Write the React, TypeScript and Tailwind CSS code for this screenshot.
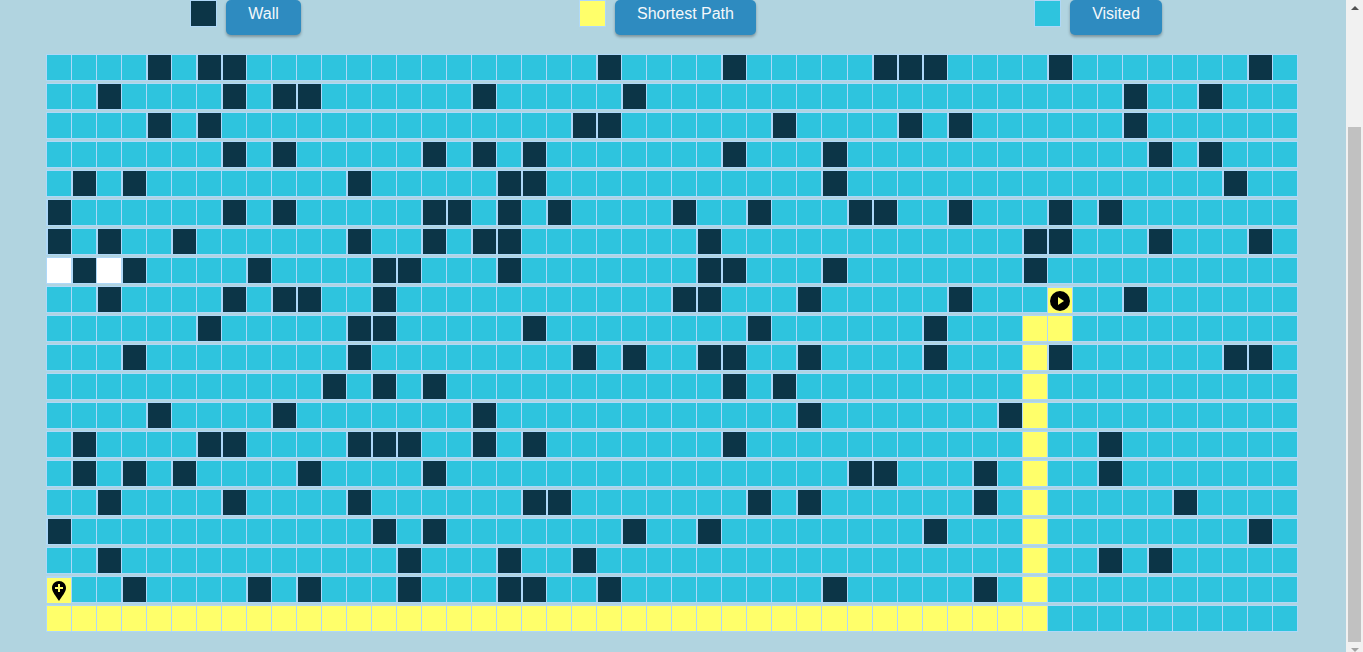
// Pathfinding board: legend on top, then a 20 x 50 grid of cells. The page is shown scrolled,
// so the legend row is clipped at the top edge.

const COLS = 50

// wall column indexes per row
const WALLS: number[][] = [
  [4, 6, 7, 22, 27, 33, 34, 35, 40, 48],
  [2, 7, 9, 10, 17, 23, 43, 46],
  [4, 6, 21, 22, 29, 34, 36, 43],
  [7, 9, 15, 17, 19, 27, 31, 44, 46],
  [1, 3, 12, 18, 19, 31, 47],
  [0, 7, 9, 15, 16, 18, 20, 25, 28, 32, 33, 36, 40, 42],
  [0, 2, 5, 12, 15, 17, 18, 26, 39, 40, 44, 48],
  [1, 3, 8, 13, 14, 18, 26, 27, 31, 39],
  [2, 7, 9, 10, 13, 25, 26, 30, 36, 43],
  [6, 12, 13, 19, 28, 35],
  [3, 12, 21, 23, 26, 27, 30, 35, 40, 47, 48],
  [11, 13, 15, 27, 29],
  [4, 9, 17, 30, 38],
  [1, 6, 7, 12, 13, 14, 17, 19, 27, 42],
  [1, 3, 5, 10, 15, 32, 33, 37, 42],
  [2, 7, 12, 19, 20, 28, 30, 37, 45],
  [0, 13, 15, 23, 26, 35, 48],
  [2, 14, 18, 21, 42, 44],
  [3, 8, 10, 14, 18, 19, 22, 31, 37],
  [],
]

const UNVISITED: [number, number][] = [
  [7, 0],
  [7, 2],
]

function isPath(row: number, col: number) {
  if (row === 19) return col < 40
  if (row === 18 && col === 0) return true
  if (row === 8 && col === 40) return true
  if (row === 9 && col === 40) return true
  return row >= 9 && row <= 18 && col === 39
}

function cellClass(row: number, col: number) {
  // walls sit one pixel further in on their left side
  if (WALLS[row].includes(col)) return "border-y border-l-2 bg-[#0c3547]"
  if (UNVISITED.some(([r, c]) => r === row && c === col)) return "border-y border-l bg-white"
  if ((row === 18 && col === 0) || (row === 8 && col === 40)) return "border-t-2 border-l bg-[#ffff6a]"
  if (isPath(row, col)) return "border-y border-l bg-[#ffff6a]"
  return "border-y border-l bg-[#2ec4de]"
}

function PinIcon() {
  return (
    <svg viewBox="0 0 14 20" className="h-5 w-[14px]">
      <path d="M7 0C3 0 0 3 0 7c0 4 4 8 7 13 3-5 7-9 7-13 0-4-3-7-7-7z" fill="#000" />
      <path d="M6 3h2v3h3v2H8v3H6V8H3V6h3z" fill="#ffff6a" />
    </svg>
  )
}

function StartIcon() {
  return (
    <svg viewBox="0 0 20 20" className="h-5 w-5">
      <circle cx="10" cy="10" r="10" fill="#000" />
      <path d="M8 6l6 4-6 4z" fill="#ffff6a" />
    </svg>
  )
}

function LegendItem({ label, swatch, width }: { label: string; swatch: string; width: string }) {
  return (
    <div className="flex items-start gap-[9px]">
      <div className={`h-[27px] w-[27px] border border-[#afd8f8] ${swatch}`} />
      <button
        className={`flex h-[35px] items-start justify-center rounded-[5px] bg-[#2e8bc0] pt-[2px] text-base text-[#f4f8fb] shadow-[0_2px_3px_rgba(0,0,0,0.3)] ${width}`}
      >
        {label}
      </button>
    </div>
  )
}

export default function App() {
  return (
    <div className="flex h-[652px] overflow-hidden bg-[#b1d4e0] font-['Liberation_Sans',sans-serif]">
      <main className="w-[1346px] shrink-0">
        <div className="flex h-[54px] gap-[278px] pl-[190px]">
          <LegendItem label="Wall" swatch="bg-[#0c3547]" width="w-[75px]" />
          <LegendItem label="Shortest Path" swatch="bg-[#ffff6a]" width="w-[141px]" />
          <LegendItem label="Visited" swatch="bg-[#2ec4de]" width="w-[92px]" />
        </div>

        <div className="ml-[46px] flex w-[1252px] flex-col gap-[2px]">
          {WALLS.map((_, row) => (
            <div key={row} className="flex h-[27px] border-r border-[#afd8f8]">
              {Array.from({ length: COLS }, (_, col) => (
                <div
                  key={col}
                  className={`flex w-[25.02px] shrink-0 items-center justify-center border-[#afd8f8] ${cellClass(row, col)}`}
                >
                  {row === 18 && col === 0 && <PinIcon />}
                  {row === 8 && col === 40 && <StartIcon />}
                </div>
              ))}
            </div>
          ))}
        </div>
      </main>

      {/* browser scrollbar of the scrolled page */}
      <div className="flex w-[17px] flex-col items-center bg-[#f1f1f1]">
        <div className="mt-[6px] h-0 w-0 border-x-[4px] border-b-[4px] border-x-transparent border-b-[#505050]" />
        <div className="mt-[117px] h-[516px] w-[13px] bg-[#c1c1c1]" />
        <div className="mt-[6px] h-0 w-0 border-x-[4px] border-t-[4px] border-x-transparent border-t-[#a3a3a3]" />
      </div>
    </div>
  )
}
